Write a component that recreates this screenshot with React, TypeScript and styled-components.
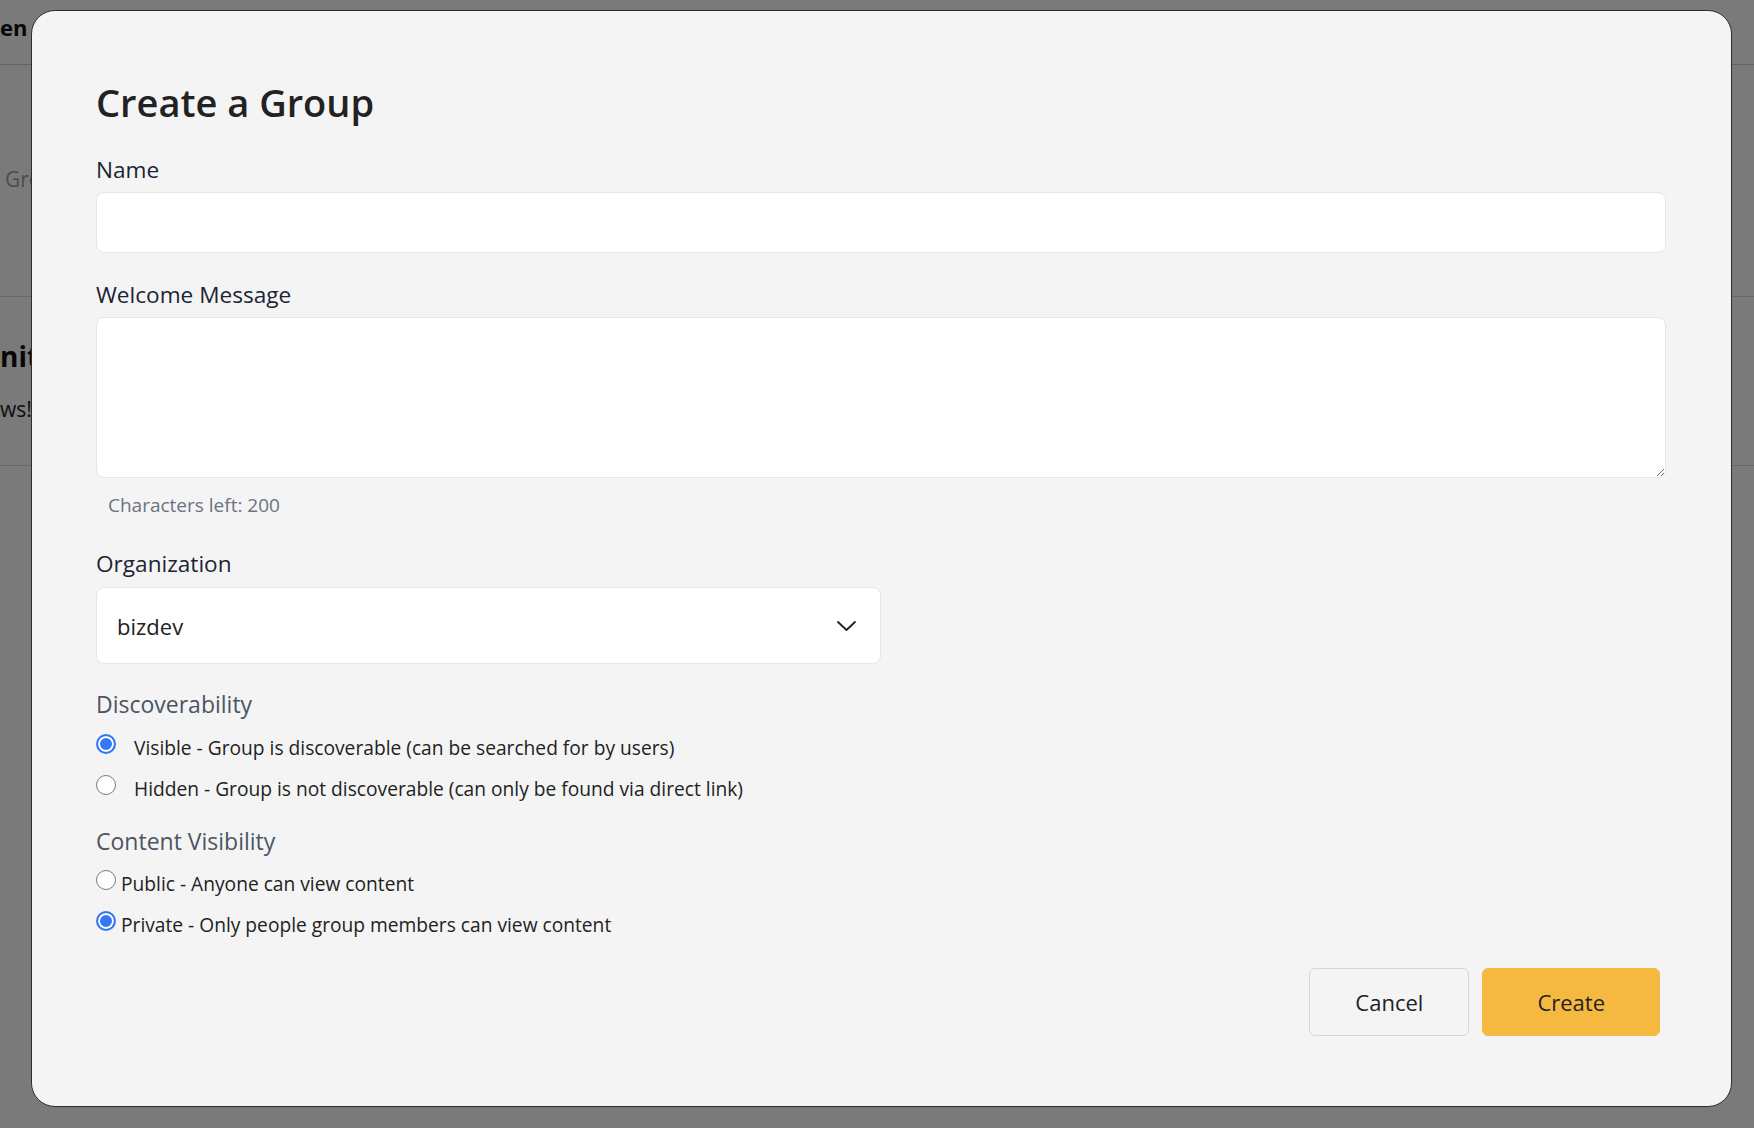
import styled, { createGlobalStyle } from "styled-components";

const GlobalStyle = createGlobalStyle`
  html, body {
    margin: 0;
    padding: 0;
    background: #ffffff;
    font-family: "Open Sans", "Noto Sans", Arial, sans-serif;
  }
  * {
    box-sizing: border-box;
  }
`;

const PageBehind = styled.div`
  width: 1754px;
  height: 1128px;
  overflow: hidden;
  background: #ffffff;
`;

const TopBar = styled.div`
  height: 65px;
  padding-top: 12px;
  border-bottom: 1px solid #c9ced6;
  font-size: 22px;
  font-weight: 700;
  color: #111111;
  white-space: nowrap;
`;

const PageSection = styled.div<{ $height: number; $top: number }>`
  height: ${(p) => p.$height}px;
  padding-top: ${(p) => p.$top}px;
  border-bottom: 1px solid #d6dae0;
  white-space: nowrap;
`;

const MutedLine = styled.div`
  padding-left: 5px;
  font-size: 21px;
  color: #9aa1ab;
`;

const BoldLine = styled.div`
  font-size: 28px;
  font-weight: 700;
  color: #111111;
  margin-bottom: 20px;
`;

const PlainLine = styled.div`
  font-size: 21px;
  color: #222222;
`;

const Overlay = styled.div`
  position: fixed;
  inset: 0;
  background: rgba(0, 0, 0, 0.52);
  display: flex;
  align-items: flex-start;
  padding: 10px 22px 0 31px;
`;

const Modal = styled.div`
  flex: 1;
  background: #f4f4f4;
  border: 1px solid #2e2e2e;
  border-radius: 24px;
  padding: 65px 65px 70px 64px;
`;

const Title = styled.h1`
  margin: 0 0 26px;
  font-size: 38px;
  font-weight: 600;
  color: #222222;
  line-height: normal;
`;

const Field = styled.div<{ $space: number }>`
  margin-bottom: ${(p) => p.$space}px;
`;

const FieldLabel = styled.label`
  display: block;
  margin-bottom: 7px;
  font-size: 22.6px;
  font-weight: 500;
  color: #1c2434;
`;

const TextInput = styled.input`
  display: block;
  width: 100%;
  height: 61px;
  padding: 0 20px;
  background: #ffffff;
  border: 1px solid #e4e6ea;
  border-radius: 8px;
  font-family: inherit;
  font-size: 22px;
  outline: none;
`;

const TextArea = styled.textarea`
  display: block;
  width: 100%;
  height: 161px;
  margin-top: 4px;
  padding: 14px 20px;
  background: #ffffff;
  border: 1px solid #e4e6ea;
  border-radius: 8px;
  font-family: inherit;
  font-size: 22px;
  outline: none;
`;

const Hint = styled.div`
  margin-top: 14px;
  padding-left: 12px;
  font-size: 19px;
  color: #6b7280;
`;

const SelectBox = styled.div`
  width: 785px;
  height: 77px;
  margin-top: 8px;
  padding: 0 24px 0 20px;
  display: flex;
  align-items: center;
  justify-content: space-between;
  background: #ffffff;
  border: 1px solid #e4e6ea;
  border-radius: 8px;
`;

const SelectValue = styled.span`
  font-size: 22px;
  color: #222222;
`;

const SectionLabel = styled.div<{ $space: number }>`
  margin-bottom: ${(p) => p.$space}px;
  font-size: 23px;
  font-weight: 500;
  color: #4b5563;
`;

const RadioList = styled.div<{ $space: number }>`
  display: flex;
  flex-direction: column;
  gap: 14px;
  margin-bottom: ${(p) => p.$space}px;
`;

const RadioRow = styled.label<{ $gap: number }>`
  display: flex;
  align-items: flex-start;
  gap: ${(p) => p.$gap}px;
  font-size: 19.2px;
  color: #222222;
  cursor: pointer;
`;

const Radio = styled.input`
  appearance: none;
  flex: none;
  width: 20px;
  height: 20px;
  margin: 0;
  border: 1.5px solid #7a7a7a;
  border-radius: 50%;
  background: #ffffff;

  &:checked {
    border: 2px solid #3478f6;
    background: #3478f6;
    box-shadow: inset 0 0 0 2px #ffffff;
  }
`;

const Actions = styled.div`
  display: flex;
  justify-content: flex-end;
  gap: 13px;
  padding-right: 6px;
`;

const Button = styled.button<{ $primary?: boolean }>`
  height: 68px;
  padding: 0 ${(p) => (p.$primary ? 54 : 45)}px;
  border-radius: 6px;
  border: 1px solid ${(p) => (p.$primary ? "#f5b942" : "#d6d6d6")};
  background: ${(p) => (p.$primary ? "#f5b942" : "#f4f4f4")};
  font-family: inherit;
  font-size: 22px;
  color: #222222;
  cursor: pointer;
`;

const Chevron = () => (
  <svg width="19" height="10" viewBox="0 0 19 10" fill="none">
    <path d="M1 1l8.5 8L18 1" stroke="#1f1f1f" strokeWidth="1.8" strokeLinecap="round" strokeLinejoin="round" />
  </svg>
);

const App = () => {
  return (
    <>
      <GlobalStyle />
      <PageBehind>
        <TopBar>en Groups</TopBar>
        <PageSection $height={232} $top={100}>
          <MutedLine>Groups</MutedLine>
        </PageSection>
        <PageSection $height={169} $top={40}>
          <BoldLine>nity</BoldLine>
          <PlainLine>ws!</PlainLine>
        </PageSection>
      </PageBehind>

      <Overlay>
        <Modal>
          <Title>Create a Group</Title>

          <Field $space={26}>
            <FieldLabel>Name</FieldLabel>
            <TextInput type="text" />
          </Field>

          <Field $space={30}>
            <FieldLabel>Welcome Message</FieldLabel>
            <TextArea />
            <Hint>Characters left: 200</Hint>
          </Field>

          <Field $space={24}>
            <FieldLabel>Organization</FieldLabel>
            <SelectBox>
              <SelectValue>bizdev</SelectValue>
              <Chevron />
            </SelectBox>
          </Field>

          <SectionLabel $space={14}>Discoverability</SectionLabel>
          <RadioList $space={23}>
            <RadioRow $gap={18}>
              <Radio type="radio" name="discover" defaultChecked />
              Visible - Group is discoverable (can be searched for by users)
            </RadioRow>
            <RadioRow $gap={18}>
              <Radio type="radio" name="discover" />
              Hidden - Group is not discoverable (can only be found via direct link)
            </RadioRow>
          </RadioList>

          <SectionLabel $space={13}>Content Visibility</SectionLabel>
          <RadioList $space={30}>
            <RadioRow $gap={5}>
              <Radio type="radio" name="content" />
              Public - Anyone can view content
            </RadioRow>
            <RadioRow $gap={5}>
              <Radio type="radio" name="content" defaultChecked />
              Private - Only people group members can view content
            </RadioRow>
          </RadioList>

          <Actions>
            <Button type="button">Cancel</Button>
            <Button type="button" $primary>
              Create
            </Button>
          </Actions>
        </Modal>
      </Overlay>
    </>
  );
};

export default App;
